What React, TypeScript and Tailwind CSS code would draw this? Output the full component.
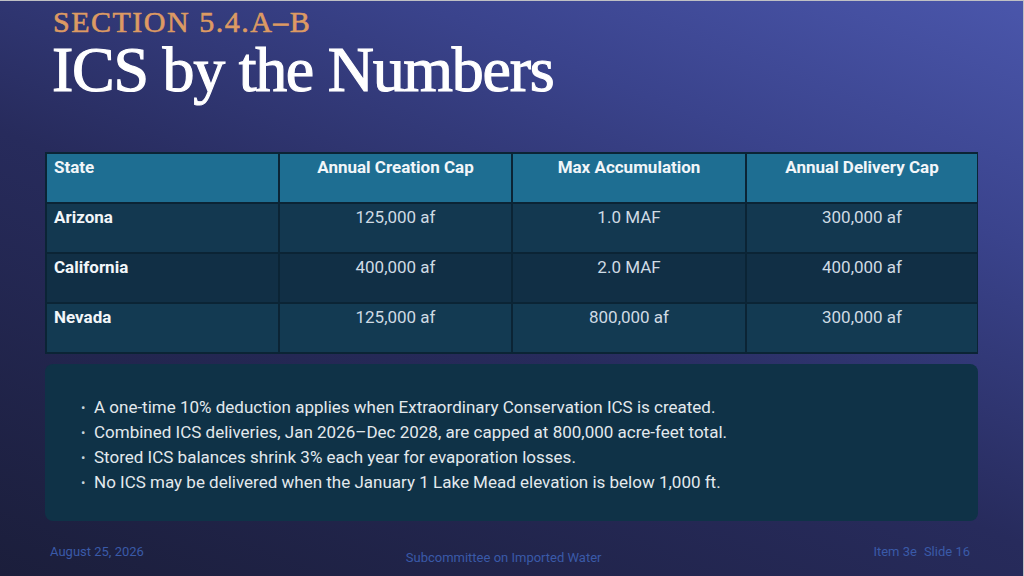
import React from "react";

const rows = [
  { state: "Arizona", a: "125,000 af", b: "1.0 MAF", c: "300,000 af", bg: "bg-[#133850]" },
  { state: "California", a: "400,000 af", b: "2.0 MAF", c: "400,000 af", bg: "bg-[#112f45]" },
  { state: "Nevada", a: "125,000 af", b: "800,000 af", c: "300,000 af", bg: "bg-[#133a52]" },
];

const notes = [
  "A one-time 10% deduction applies when Extraordinary Conservation ICS is created.",
  "Combined ICS deliveries, Jan 2026\u2013Dec 2028, are capped at 800,000 acre-feet total.",
  "Stored ICS balances shrink 3% each year for evaporation losses.",
  "No ICS may be delivered when the January 1 Lake Mead elevation is below 1,000 ft.",
];

export default function App() {
  return (
    <div
      className="w-[1024px] h-[576px] overflow-hidden flex flex-col border-t border-r border-[#bfc0c4] bg-[linear-gradient(22deg,#1b1e3b_0%,#272b5c_45%,#3a438c_75%,#4a56ab_100%)]"
      style={{ fontFamily: "Roboto, 'Noto Sans', sans-serif" }}
    >
      <div className="px-[45px] flex flex-col">
        <div
          className="pl-[8px] pt-[6px] text-[30px] leading-none tracking-[0.05em] text-[#dd9a63] [-webkit-text-stroke:0.6px_#dd9a63]"
          style={{ fontFamily: "'Liberation Serif', serif" }}
        >
          SECTION 5.4.A–B
        </div>
        <div
          className="pl-[7px] mt-[1px] text-[64px] leading-none tracking-[-0.02em] text-white [-webkit-text-stroke:1.1px_#ffffff]"
          style={{ fontFamily: "'Liberation Serif', serif" }}
        >
          ICS by the Numbers
        </div>

        <div className="mt-[50px] grid grid-cols-[231px_231px_232px_230px] gap-[2px] p-[2px] bg-[#0b2435]">
          {["State", "Annual Creation Cap", "Max Accumulation", "Annual Delivery Cap"].map((h, i) => (
            <div
              key={h}
              className={`h-[48px] bg-[#1e6e92] pt-[3px] text-[17px] leading-[20px] font-bold text-[#f2f6f9] ${
                i === 0 ? "pl-[7px] text-left" : "text-center"
              }`}
            >
              {h}
            </div>
          ))}
          {rows.map((r) => (
            <React.Fragment key={r.state}>
              <div className={`h-[48px] ${r.bg} pl-[7px] pt-[3px] text-[17px] leading-[20px] font-bold text-[#f2f6f9]`}>
                {r.state}
              </div>
              <div className={`h-[48px] ${r.bg} pt-[3px] text-center text-[17px] leading-[20px] text-[#cfdbe4]`}>{r.a}</div>
              <div className={`h-[48px] ${r.bg} pt-[3px] text-center text-[17px] leading-[20px] text-[#cfdbe4]`}>{r.b}</div>
              <div className={`h-[48px] ${r.bg} pt-[3px] text-center text-[17px] leading-[20px] text-[#cfdbe4]`}>{r.c}</div>
            </React.Fragment>
          ))}
        </div>

        <div className="mt-[10px] h-[157px] rounded-[8px] bg-[#0f3247] pt-[31px] pl-[36px]">
          {notes.map((n) => (
            <div key={n} className="flex items-start text-[17px] leading-[25px] text-[#e3e9ed]">
              <span className="w-[13px] text-[#c9d3da] text-[13px]">•</span>
              <span>{n}</span>
            </div>
          ))}
        </div>
      </div>

      <div className="mt-[23px] px-[50px] pr-[53px] flex justify-between items-start text-[13px] leading-[16px] text-[#3a5aa8]">
        <span>August 25, 2026</span>
        <span className="mt-[6px] mr-[10px]">Subcommittee on Imported Water</span>
        <span>
          Item 3e<span className="ml-[7px]">Slide 16</span>
        </span>
      </div>
    </div>
  );
}
